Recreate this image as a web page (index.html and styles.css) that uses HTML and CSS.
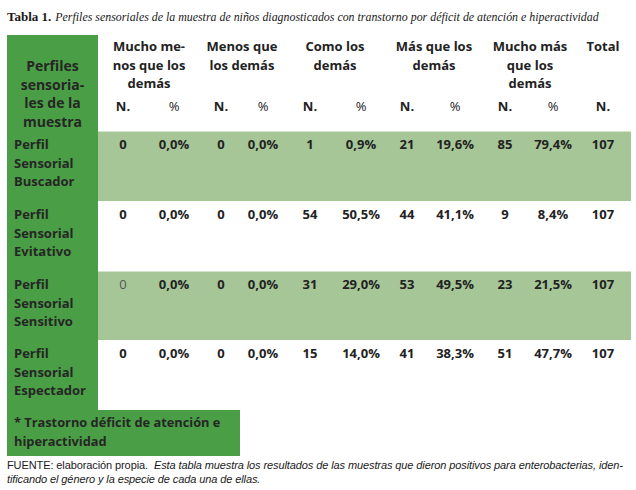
FILE: index.html
```html
<!DOCTYPE html>
<html lang="es">
<head>
<meta charset="utf-8">
<title>Tabla 1</title>
<link rel="stylesheet" href="styles.css">
</head>
<body>
<div class="page">
  <p class="caption"><span class="cap-num">Tabla 1.</span> <span class="cap-text">Perfiles sensoriales de la muestra de niños diagnosticados con transtorno por déficit de atención e hiperactividad</span></p>

  <div class="table">
    <div class="head">
      <div class="head-label">Perfiles<br>sensoria-<br>les de la<br>muestra</div>
      <div class="grp g1">Mucho me-<br>nos que los<br>demás</div>
      <div class="grp g2">Menos que<br>los demás</div>
      <div class="grp g3">Como los<br>demás</div>
      <div class="grp g4">Más que los<br>demás</div>
      <div class="grp g5">Mucho más<br>que los<br>demás</div>
      <div class="grp g6">Total</div>
      <div class="sub">N.</div><div class="sub pct">%</div>
      <div class="sub">N.</div><div class="sub pct">%</div>
      <div class="sub">N.</div><div class="sub pct">%</div>
      <div class="sub">N.</div><div class="sub pct">%</div>
      <div class="sub">N.</div><div class="sub pct">%</div>
      <div class="sub">N.</div>
    </div>

    <div class="row band">
      <div class="label">Perfil<br>Sensorial<br>Buscador</div>
      <div>0</div><div>0,0%</div><div>0</div><div>0,0%</div><div>1</div><div>0,9%</div><div>21</div><div>19,6%</div><div>85</div><div>79,4%</div><div>107</div>
    </div>
    <div class="row">
      <div class="label">Perfil<br>Sensorial<br>Evitativo</div>
      <div>0</div><div>0,0%</div><div>0</div><div>0,0%</div><div>54</div><div>50,5%</div><div>44</div><div>41,1%</div><div>9</div><div>8,4%</div><div>107</div>
    </div>
    <div class="row band short">
      <div class="label">Perfil<br>Sensorial<br>Sensitivo</div>
      <div class="light">0</div><div>0,0%</div><div>0</div><div>0,0%</div><div>31</div><div>29,0%</div><div>53</div><div>49,5%</div><div>23</div><div>21,5%</div><div>107</div>
    </div>
    <div class="row">
      <div class="label">Perfil<br>Sensorial<br>Espectador</div>
      <div>0</div><div>0,0%</div><div>0</div><div>0,0%</div><div>15</div><div>14,0%</div><div>41</div><div>38,3%</div><div>51</div><div>47,7%</div><div>107</div>
    </div>
  </div>

  <div class="note">* Trastorno déficit de atención e<br>hiperactividad</div>

  <p class="source"><span class="src-line">FUENTE: elaboración propia.&nbsp; <em>Esta tabla muestra los resultados de las muestras que dieron positivos para enterobacterias, iden-</em></span><span class="src-line"><em>tificando el género y la especie de cada una de ellas.</em></span></p>
</div>
</body>
</html>
```
FILE: styles.css
```css
html, body {
  margin: 0;
  padding: 0;
  background: #ffffff;
}

.page {
  width: 636px;
  height: 490px;
  padding: 0 0 0 7px;
  box-sizing: border-box;
  color: #222222;
  font-family: "Open Sans", "Noto Sans", sans-serif;
}

.caption {
  margin: 0;
  padding-top: 8px;
  height: 35px;
  box-sizing: border-box;
  line-height: 16px;
  white-space: nowrap;
  font-family: "Liberation Serif", serif;
  color: #1a1a1a;
}

.cap-num {
  font-weight: bold;
  font-size: 13px;
}

.cap-text {
  font-style: italic;
  font-size: 11.9px;
}

.table {
  width: 624px;
}

.head,
.row {
  display: grid;
  grid-template-columns: 91px 50px 52px 42px 42px 52px 50px 42px 54px 46px 50px 53px;
  font-weight: 700;
  font-size: 13px;
}

.head {
  height: 96px;
  grid-template-rows: 62px 18px 16px;
  line-height: 18.5px;
}

.head-label {
  grid-row: 1 / 4;
  grid-column: 1;
  background: #4a9e45;
  display: flex;
  flex-direction: column;
  justify-content: flex-end;
  align-items: center;
  text-align: center;
  font-size: 14px;
  line-height: 18.4px;
  padding-bottom: 0;
  color: #262626;
}

.grp {
  grid-row: 1;
  text-align: center;
  padding-top: 2px;
}

.g1 { grid-column: 2 / 4; }
.g2 { grid-column: 4 / 6; }
.g3 { grid-column: 6 / 8; }
.g4 { grid-column: 8 / 10; }
.g5 { grid-column: 10 / 12; }
.g6 { grid-column: 12; padding-right: 3px; }

.sub {
  grid-row: 2;
  text-align: center;
  line-height: 18px;
}

.pct {
  font-weight: 400;
}

.head .sub:last-child {
  padding-right: 3px;
}

.row {
  height: 70px;
  line-height: 18.5px;
}

.row.short {
  height: 69px;
}

.row > div {
  text-align: center;
  padding-top: 4px;
}

.row > div:last-child {
  padding-right: 3px;
}

.row > .label {
  text-align: left;
  background: #4a9e45;
  padding-left: 7px;
  color: #262626;
}

.row > .light {
  font-weight: 400;
  color: #555555;
}

.band {
  background: #a6c697;
  box-shadow: inset 0 1px 0 #d4e3cc;
}

.note {
  width: 233px;
  height: 46px;
  box-sizing: border-box;
  background: #4a9e45;
  padding: 3px 0 0 7px;
  font-weight: 700;
  font-size: 12.8px;
  line-height: 19px;
  color: #262626;
}

.source {
  margin: 0;
  padding-top: 2px;
  font-family: "Liberation Sans", sans-serif;
  font-size: 11px;
  line-height: 14px;
  color: #1a1a1a;
}

.src-line {
  display: block;
  white-space: nowrap;
  letter-spacing: -0.1px;
}
```
